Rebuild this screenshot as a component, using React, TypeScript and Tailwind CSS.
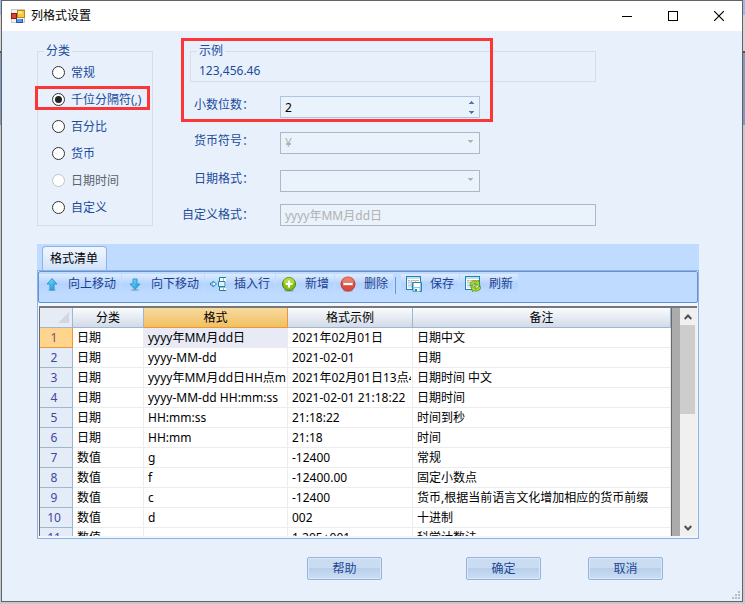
import { useState } from "react";

type FormatRow = {
  category: string;
  format: string;
  sample: string;
  remark: string;
};

const categories = [
  { id: "general", label: "常规" },
  { id: "thousands", label: "千位分隔符(,)", marked: true },
  { id: "percent", label: "百分比" },
  { id: "currency", label: "货币" },
  { id: "datetime", label: "日期时间", disabled: true },
  { id: "custom", label: "自定义" },
];

const rows: FormatRow[] = [
  { category: "日期", format: "yyyy年MM月dd日", sample: "2021年02月01日", remark: "日期中文" },
  { category: "日期", format: "yyyy-MM-dd", sample: "2021-02-01", remark: "日期" },
  { category: "日期", format: "yyyy年MM月dd日HH点m", sample: "2021年02月01日13点4", remark: "日期时间 中文" },
  { category: "日期", format: "yyyy-MM-dd HH:mm:ss", sample: "2021-02-01 21:18:22", remark: "日期时间" },
  { category: "日期", format: "HH:mm:ss", sample: "21:18:22", remark: "时间到秒" },
  { category: "日期", format: "HH:mm", sample: "21:18", remark: "时间" },
  { category: "数值", format: "g", sample: "-12400", remark: "常规" },
  { category: "数值", format: "f", sample: "-12400.00", remark: "固定小数点" },
  { category: "数值", format: "c", sample: "-12400", remark: "货币,根据当前语言文化增加相应的货币前缀" },
  { category: "数值", format: "d", sample: "002", remark: "十进制" },
  { category: "数值", format: "", sample: "1.205+001", remark: "科学计数法" },
];

function AppIcon() {
  return (
    <svg width="14" height="14" viewBox="0 0 14 14" shapeRendering="crispEdges">
      <rect width="14" height="14" fill="#c9c9c9" />
      <rect x="1" y="1" width="12" height="12" fill="#f4f4f4" />
      <rect x="0" y="4" width="6" height="6" fill="#8a1a10" />
      <rect x="1" y="5" width="4" height="4" fill="#e0442e" />
      <rect x="6" y="1" width="8" height="8" fill="#b98a10" />
      <rect x="7" y="2" width="6" height="6" fill="#fbc93b" />
      <rect x="7" y="2" width="4" height="3" fill="#ffe38c" />
      <rect x="5" y="10" width="7" height="4" fill="#2456b8" />
      <rect x="6" y="10" width="5" height="3" fill="#5b94ee" />
    </svg>
  );
}

function ArrowIcon({ down }: { down?: boolean }) {
  return (
    <svg width="16" height="16" viewBox="0 0 16 16">
      <defs>
        <linearGradient id="arrow" x1="0" y1="0" x2="1" y2="1">
          <stop offset="0" stopColor="#8be4fb" />
          <stop offset="1" stopColor="#0a8fd6" />
        </linearGradient>
      </defs>
      <ellipse cx="8" cy="14" rx="4" ry="1" fill="#8fb0d8" />
      <path
        d={down ? "M6 3h4v5h3l-5 5.500-5-5.500h3z" : "M8 2.500l5 5.500h-3v6H6V8H3z"}
        fill="url(#arrow)"
        stroke="#2a9ad2"
        strokeLinejoin="round"
      />
    </svg>
  );
}

function InsertIcon() {
  return (
    <svg width="16" height="16" viewBox="0 0 16 16">
      <path d="M10 2h6v12h-6z" fill="#fff" />
      <path d="M13.500 2v12M10 11.500h6" stroke="#9fb9cf" fill="none" />
      <path d="M9.500 5V1.500H16M9.500 11v3.500H16" stroke="#177d9f" fill="none" />
      <path d="M8.500 5.500H15v5H8.500z" fill="#dff3fb" stroke="#1c86a8" />
      <path d="M.5 7H3V5l3.500 3L3 11V9H.5z" fill="#dff3fb" stroke="#2b86aa" />
    </svg>
  );
}

function AddIcon() {
  return (
    <svg width="16" height="16" viewBox="0 0 16 16">
      <ellipse cx="8" cy="14.500" rx="5" ry="1.200" fill="#93abc9" />
      <circle cx="8" cy="8" r="6.500" fill="#86bf0b" stroke="#4b8212" />
      <path d="M2.500 7a5.500 5.500 0 0 1 11 0z" fill="#b0da3c" />
      <path d="M8 4.500v7M4.500 8h7" stroke="#fff" strokeWidth="2.200" />
    </svg>
  );
}

function RemoveIcon() {
  return (
    <svg width="16" height="16" viewBox="0 0 16 16">
      <ellipse cx="8" cy="14.800" rx="5" ry="1" fill="#93abc9" />
      <circle cx="8" cy="8" r="7" fill="#e4483a" stroke="#c43a30" />
      <path d="M2 7a6 6 0 0 1 12 0z" fill="#ee7a68" />
      <rect x="3" y="6.500" width="10" height="3" fill="#fff" stroke="#b9402f" strokeWidth=".5" />
    </svg>
  );
}

function SheetGrid() {
  return (
    <>
      <rect x=".5" y=".5" width="14" height="13" fill="#fff" stroke="#1e86b4" />
      <path d="M1 2h13" stroke="#7cc4e2" />
      <rect x="2" y="4" width="3" height="8" fill="#d9e9f4" />
      <path d="M2 6.500h11M2 9.500h11M5.500 4v8M9.500 4v8" stroke="#b7cddd" fill="none" />
      <path d="M2 4.500h2M6 4.500h3M10 4.500h3" stroke="#e3b35a" />
    </>
  );
}

function SaveIcon() {
  return (
    <svg width="16" height="16" viewBox="0 0 16 16">
      <SheetGrid />
      <path d="M6.500 6.500h9v9h-8l-1-1z" fill="#8cc4e4" stroke="#2a86b6" />
      <rect x="8" y="7" width="6" height="4" fill="#fff" />
      <rect x="8.500" y="12" width="5" height="3.500" fill="#fff" />
      <rect x="9" y="13" width="2" height="2.500" fill="#2a86b6" />
    </svg>
  );
}

function RefreshIcon() {
  return (
    <svg width="16" height="16" viewBox="0 0 16 16">
      <SheetGrid />
      <path d="M5 9.500C5 5.500 9 3.500 12 5.500L13.500 4l1.500 5H9.500L11 7.500C9.500 7 8 7.500 7.500 9.500z" fill="#a8dc1c" stroke="#4b8a12" strokeWidth=".7" />
      <path d="M15.800 10.500c0 4-4 5.500-7 4L7.500 15.800l-1.500-5h5.500L10 12.500c1.500.6 2.800 0 3.300-2z" fill="#a8dc1c" stroke="#4b8a12" strokeWidth=".7" />
    </svg>
  );
}

function SmallArrow({ up }: { up?: boolean }) {
  return (
    <svg width="5" height="3" viewBox="0 0 5 3" fill="currentColor" shapeRendering="crispEdges">
      <path d={up ? "M2 0h1v1h1v1h1v1H0V2h1V1h1z" : "M0 0h5v1H4v1H3v1H2V2H1V1H0z"} />
    </svg>
  );
}

const toolGroups = [
  [
    { label: "向上移动", icon: <ArrowIcon /> },
    { label: "向下移动", icon: <ArrowIcon down /> },
    { label: "插入行", icon: <InsertIcon /> },
    { label: "新增", icon: <AddIcon /> },
    { label: "删除", icon: <RemoveIcon /> },
  ],
  [
    { label: "保存", icon: <SaveIcon /> },
    { label: "刷新", icon: <RefreshIcon /> },
  ],
];

function TitleBar() {
  return (
    <header className="flex h-[30px] items-center bg-white pl-[9px]">
      <AppIcon />
      <h1 className="flex-1 pl-[6px] text-xs text-black">列格式设置</h1>
      <button type="button" aria-label="最小化" className="grid h-[30px] w-[46px] place-items-center">
        <svg width="10" height="10" viewBox="0 0 10 10" shapeRendering="crispEdges">
          <path d="M0 5.500h10" stroke="#000" />
        </svg>
      </button>
      <button type="button" aria-label="最大化" className="grid h-[30px] w-[46px] place-items-center">
        <svg width="10" height="10" viewBox="0 0 10 10" shapeRendering="crispEdges">
          <rect x=".5" y=".5" width="9" height="9" fill="none" stroke="#000" />
        </svg>
      </button>
      <button type="button" aria-label="关闭" className="grid h-[30px] w-[46px] place-items-center">
        <svg width="10" height="10" viewBox="0 0 10 10">
          <path d="M0 0l10 10M10 0L0 10" stroke="#000" strokeWidth="1.200" />
        </svg>
      </button>
    </header>
  );
}

function CategoryGroup() {
  const [selected, setSelected] = useState("thousands");

  return (
    <fieldset className="w-[116px] shrink-0 border border-[#dadcdf] pb-1">
      <legend className="ml-[6px] px-[2px] leading-4">分类</legend>
      {categories.map((item) => (
        <label
          key={item.id}
          className="relative flex h-[27px] items-center gap-[6px] pl-[14px] has-disabled:text-[#59616e]"
        >
          <input
            type="radio"
            name="category"
            checked={selected === item.id}
            disabled={item.disabled}
            onChange={() => setSelected(item.id)}
            className="grid size-[13px] appearance-none place-content-center rounded-full border border-[#333] bg-white checked:before:size-[7px] checked:before:rounded-full checked:before:bg-[#222] disabled:border-[#c3c3c3]"
          />
          {item.label}
          {item.marked && (
            <span className="pointer-events-none absolute top-0 right-[2px] -left-[3px] h-6 border-3 border-[#fb3636]" />
          )}
        </label>
      ))}
    </fieldset>
  );
}

function FormatFields() {
  const [digits, setDigits] = useState(2);
  const labelClass = "w-[98px] shrink-0 pr-[26px] text-right leading-[18px]";
  const boxClass = "h-[22px] border border-[#abb8c6] bg-[#eaf2fb] px-1 text-xs text-[#b1b1b1]";

  return (
    <div className="relative flex-1">
      <fieldset className="ml-2 border border-[#dadcdf]">
        <legend className="ml-[6px] px-[2px] leading-4">示例</legend>
        <output className="block pt-[2px] pl-2 leading-5">123,456.46</output>
      </fieldset>

      <div className="mt-[14px] flex">
        <label htmlFor="digits" className={labelClass}>小数位数：</label>
        <div className="relative w-[200px]">
          <input
            id="digits"
            type="number"
            value={digits}
            onChange={(e) => setDigits(Number(e.target.value))}
            className="block h-[22px] w-full border border-[#adc4e2] bg-[#eaf2fb] px-1 text-black [appearance:textfield] [&::-webkit-inner-spin-button]:appearance-none"
          />
          <div className="absolute top-px right-px flex w-4 flex-col text-[#4f7ab5]">
            <button type="button" aria-label="增加" onClick={() => setDigits(digits + 1)} className="grid h-[10px] place-items-center">
              <SmallArrow up />
            </button>
            <button type="button" aria-label="减少" onClick={() => setDigits(Math.max(0, digits - 1))} className="grid h-[10px] place-items-center">
              <SmallArrow />
            </button>
          </div>
        </div>
      </div>

      <div className="mt-[14px] flex">
        <label htmlFor="symbol" className={labelClass}>货币符号：</label>
        <div className="relative w-[200px]">
          <select id="symbol" disabled className={`${boxClass} block w-full appearance-none opacity-100`}>
            <option>¥</option>
          </select>
          <span className="pointer-events-none absolute top-2 right-[7px] text-[#b1b1b1]">
            <SmallArrow />
          </span>
        </div>
      </div>

      <div className="mt-4 flex">
        <label htmlFor="date-format" className={labelClass}>日期格式：</label>
        <div className="relative w-[200px]">
          <select id="date-format" disabled className={`${boxClass} block w-full appearance-none opacity-100`}>
            <option></option>
          </select>
          <span className="pointer-events-none absolute top-2 right-[7px] text-[#b1b1b1]">
            <SmallArrow />
          </span>
        </div>
      </div>

      <div className="mt-3 flex items-center">
        <label htmlFor="custom-format" className={labelClass}>自定义格式：</label>
        <input
          id="custom-format"
          type="text"
          disabled
          defaultValue="yyyy年MM月dd日"
          className={`${boxClass} min-w-0 flex-1`}
        />
      </div>

      <span className="pointer-events-none absolute -top-[5px] -left-px h-[84px] w-[312px] border-3 border-[#fb3636]" />
    </div>
  );
}

function Toolbar() {
  return (
    <div className="flex h-8 items-start rounded-[2px] border border-[#6593cf] bg-[#bfdbff] pt-[2px]">
      {toolGroups.map((group, index) => (
        <div key={index} className="flex gap-px">
          {index > 0 && <span className="mt-[3px] mr-1 ml-[2px] h-[17px] w-px bg-[#6a96d2]" />}
          {group.map((tool) => (
            <button
              key={tool.label}
              type="button"
              className="flex h-5 items-center gap-2 bg-linear-to-b from-[#dfecff] via-[#b3d3ff] via-50% to-[#bfdbff] px-[5px] text-[#1d3f8e]"
            >
              {tool.icon}
              {tool.label}
            </button>
          ))}
        </div>
      ))}
    </div>
  );
}

function FormatTable() {
  const headClass =
    "border-r border-b border-[#9eb6ce] bg-linear-to-b from-[#fafcfd] to-[#d3dbe9] font-normal";
  const cellClass = "border-r border-b border-[#ececec] pr-px pl-1";
  const textClass = "overflow-hidden whitespace-nowrap";

  return (
    <table className="w-full table-fixed border-separate border-spacing-0 bg-white text-black">
      <colgroup>
        <col className="w-[33px]" />
        <col className="w-[71px]" />
        <col className="w-[144px]" />
        <col className="w-[125px]" />
        <col />
      </colgroup>
      <thead>
        <tr className="h-5">
          <td className="border-r border-b border-[#9eb6ce] bg-[#e6ecf5] pr-[3px]">
            <svg width="11" height="11" viewBox="0 0 11 11" className="ml-auto">
              <path d="M11 0v11H0z" fill="#d2d7e2" />
            </svg>
          </td>
          <th className={headClass}>分类</th>
          <th className="border-r border-b border-[#f29536] bg-linear-to-b from-[#f8d99f] to-[#f1c15f] font-normal">
            格式
          </th>
          <th className={headClass}>格式示例</th>
          <th className={headClass}>备注</th>
        </tr>
      </thead>
      <tbody>
        {rows.map((row, index) => (
          <tr key={index} className="group h-5">
            <th className="border-r border-b border-[#9eb6ce] bg-[#e4ecf7] pr-1 font-normal text-[#45459f] group-first:border-[#f29536] group-first:bg-[#ffd58d] group-first:text-[#7a4a80]">
              {index + 1}
            </th>
            <td className={cellClass}>
              <div className={textClass}>{row.category}</div>
            </td>
            <td className={`${cellClass} group-first:bg-[#e8eaf5]`}>
              <div className={textClass}>{row.format}</div>
            </td>
            <td className={cellClass}>
              <div className={textClass}>{row.sample}</div>
            </td>
            <td className={cellClass}>
              <div className={textClass}>{row.remark}</div>
            </td>
          </tr>
        ))}
      </tbody>
    </table>
  );
}

function ScrollBar() {
  return (
    <div className="flex w-[17px] shrink-0 flex-col bg-[#f0f0f0] pr-[2px]">
      <button type="button" aria-label="向上滚动" className="grid h-[17px] place-items-center">
        <svg width="8" height="6" viewBox="0 0 8 6">
          <path d="M.7 5L4 1.500 7.300 5" fill="none" stroke="#505050" strokeWidth="2" />
        </svg>
      </button>
      <div className="h-[89px] bg-[#cdcdcd]" />
      <button type="button" aria-label="向下滚动" className="mt-auto grid h-[17px] place-items-center">
        <svg width="8" height="6" viewBox="0 0 8 6">
          <path d="M.7 1L4 4.500 7.300 1" fill="none" stroke="#505050" strokeWidth="2" />
        </svg>
      </button>
    </div>
  );
}

function FormatList() {
  return (
    <section className="mt-[18px] mr-[43px]">
      <div role="tablist" className="flex h-[26px] items-end bg-[#bfdbff] pl-[5px]">
        <button
          type="button"
          role="tab"
          aria-selected="true"
          className="h-6 rounded-t-[4px] border border-b-0 border-[#8db2e3] bg-linear-to-b from-[#f2f7fe] to-[#cfe2fb] pr-2 pl-[7px] text-black"
        >
          格式清单
        </button>
      </div>
      <div className="border border-[#8db2e3] bg-[#f0f6fd]">
        <Toolbar />
        <div className="mx-px mt-[3px] mb-[2px] flex h-[230px] border-t-2 border-[#777] bg-white">
          <div className="min-w-0 flex-1 overflow-hidden border-x border-[#696969]">
            <FormatTable />
          </div>
          <div className="w-2 bg-[#ababab]" />
          <ScrollBar />
        </div>
      </div>
    </section>
  );
}

function DialogButton({ children }: { children: string }) {
  return (
    <button
      type="button"
      className="h-[23px] w-[75px] rounded-[2px] border border-[#96b4da] bg-linear-to-b from-[#c9dcf2] from-50% via-[#b9cfea] via-50% to-[#cbdff5] text-[#1c4592] inset-ring inset-ring-[#d8e8f9]"
    >
      {children}
    </button>
  );
}

function ResizeGrip() {
  const dots = [[6, 0], [3, 3], [6, 3], [0, 6], [3, 6], [6, 6]];
  return (
    <svg width="8" height="8" viewBox="0 0 8 8" className="absolute right-[2px] bottom-[2px]">
      {dots.map(([x, y]) => (
        <rect key={`${x}-${y}`} x={x} y={y} width="2" height="2" fill="#bcbcbc" />
      ))}
    </svg>
  );
}

function App() {
  return (
    <div className="flex min-h-screen flex-col bg-[#c8c8c8] bg-[linear-gradient(#9fb9df_0_15px,#d3d3d3_15px_51px,#555_51px_53px,#829ab9_53px_125px,#c8c8c8_125px)] pr-[2px] pb-[2px] pl-px font-['Noto_Sans','Noto_Sans_CJK_SC',sans-serif] text-xs text-[#204a9b]">
      <main className="relative flex flex-1 flex-col border border-[#60636b] bg-[#e8f1fb]">
        <TitleBar />
        <form className="pt-3 pl-[35px]" onSubmit={(e) => e.preventDefault()}>
          <div className="flex items-start gap-[29px] pr-[146px]">
            <CategoryGroup />
            <FormatFields />
          </div>
          <FormatList />
          <div className="mt-[18px] flex justify-end gap-[47px] pr-[79px] pb-5">
            <div className="pr-[37px]">
              <DialogButton>帮助</DialogButton>
            </div>
            <DialogButton>确定</DialogButton>
            <DialogButton>取消</DialogButton>
          </div>
        </form>
        <ResizeGrip />
      </main>
    </div>
  );
}

export default App;
